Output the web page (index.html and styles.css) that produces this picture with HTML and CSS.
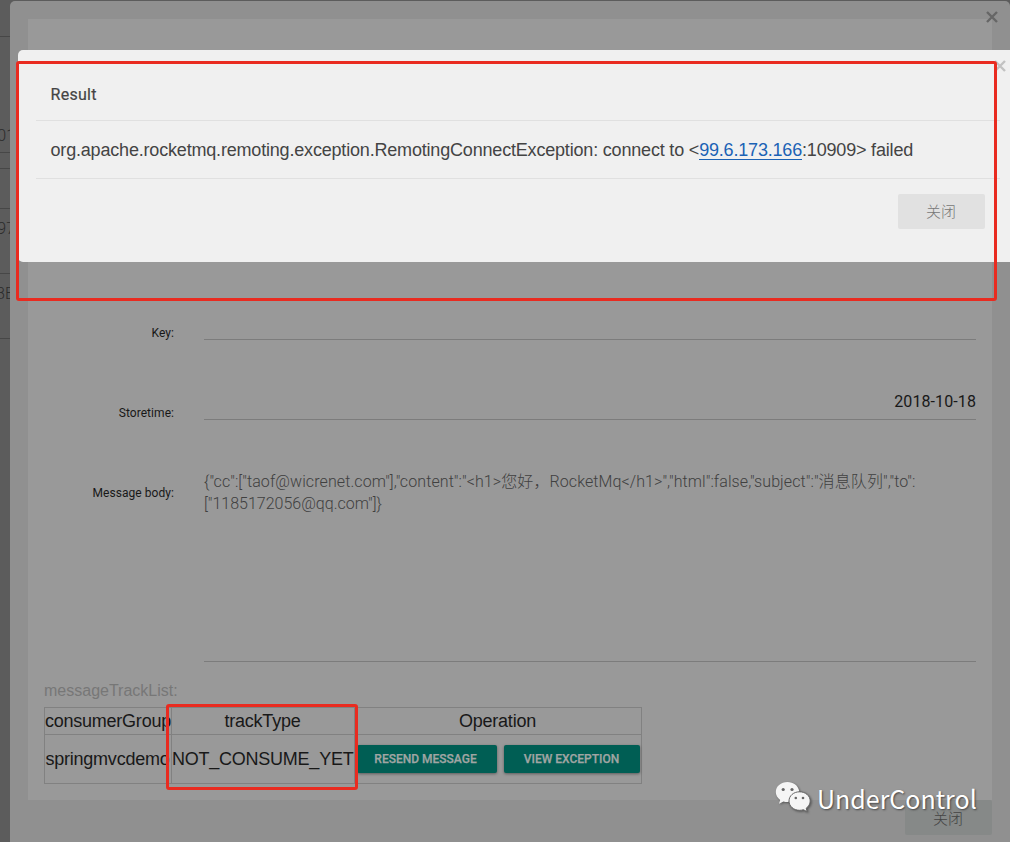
FILE: index.html
```
<!DOCTYPE html>
<html lang="zh">
<head>
<meta charset="utf-8">
<title>Message detail</title>
<link rel="stylesheet" href="styles.css">
</head>
<body>
<div class="screen">
  <aside class="behind">
    <div class="behind-row r1"></div>
    <div class="behind-row r2"><span>01</span></div>
    <div class="behind-row r3"></div>
    <div class="behind-row r4"></div>
    <div class="behind-row r5"><span>97</span></div>
    <div class="behind-row r6"><span>8E</span></div>
  </aside>
  <main class="modal">
    <svg class="modal-close" viewBox="0 0 12 12"><path d="M1 1l10 10M11 1l-10 10"/></svg>
    <section class="card">
      <div class="field"><label class="label">Key:</label><div class="input"></div></div>
      <div class="field"><label class="label">Storetime:</label><div class="input date">2018-10-18</div></div>
      <div class="field"><label class="label">Message body:</label><div class="input area"><span class="line">{"cc":["taof@wicrenet.com"],"content":"&lt;h1&gt;您好，RocketMq&lt;/h1&gt;","html":false,"subject":"消息队列","to":</span><br>["1185172056@qq.com"]}</div></div>
      <div class="track-title">messageTrackList:</div>
      <table class="track">
        <colgroup><col class="c1"><col class="c2"><col class="c3"></colgroup>
        <tr class="head"><th>consumerGroup</th><th>trackType</th><th>Operation</th></tr>
        <tr class="data"><td>springmvcdemo</td><td>NOT_CONSUME_YET</td>
          <td><div class="ops"><button class="btn resend">RESEND MESSAGE</button><button class="btn view">VIEW EXCEPTION</button></div></td></tr>
      </table>
    </section>
    <footer class="modal-foot"><button class="close-btn dim">关闭</button></footer>
  </main>

  <div class="dialog">
    <svg class="dialog-close" viewBox="0 0 12 12"><path d="M1 1l10 10M11 1l-10 10"/></svg>
    <div class="dialog-title">Result</div>
    <div class="dialog-body"><span class="msg">org.apache.rocketmq.remoting.exception.RemotingConnectException: connect to &lt;<a class="link">99.6.173.166</a>:10909&gt; failed</span></div>
    <div class="dialog-foot"><button class="close-btn">关闭</button></div>
  </div>

  <div class="mark mark-dialog"></div>
  <div class="mark mark-track"></div>

  <div class="watermark">
    <svg class="wechat" viewBox="0 0 36 32">
      <path class="bubble" d="M12.500 1C5.900 1 .8 5.400.8 11c0 3.300 1.700 6 4.400 7.900L4 22.800l4.500-2.300c1.500.400 3 .600 4.800.500L24.300 10.200C23.300 4.600 18.500 1 12.500 1z"/>
      <path class="bubble front" d="M24.500 10.800c-5.900 0-10.500 4-10.500 9.200s4.600 9.300 10.500 9.300c1.400 0 2.700-.200 3.900-.600l3.700 2-.900-3.500c2.500-1.700 4-4.300 4-7.200 0-5.200-4.700-9.200-10.700-9.200z"/>
      <g class="eyes"><circle cx="8.200" cy="8.500" r="1.600"/><circle cx="17" cy="8.500" r="1.600"/><circle cx="20.800" cy="17" r="1.300"/><circle cx="28" cy="17" r="1.300"/></g>
    </svg>
    <span class="wm-text">UnderControl</span>
  </div>
</div>
</body>
</html>
```
FILE: styles.css
```
* { box-sizing: border-box; }
body { margin: 0; }
button { border: 0; padding: 0; margin: 0; }
.screen {
  position: relative; width: 1010px; height: 842px; overflow: hidden;
  display: flex; background: #5c5c5c; padding-top: 1px;
  font-family: "Liberation Sans", "Noto Sans CJK SC", sans-serif; color: #181818;
}

/* page content that shows left of the modal */
.behind { width: 10px; overflow: hidden; flex: none; }
.behind-row {
  border-bottom: 1px solid #474747; display: flex; align-items: center; justify-content: flex-end;
  font: 300 16px/20px Roboto, sans-serif; color: #2b2b2b;
}
.behind-row span { margin-right: -5px; }
.r1 { height: 36px; }
.r2 { height: 116px; align-items: flex-end; padding-bottom: 6px; }
.r3 { height: 16px; }
.r4 { height: 40px; }
.r5 { height: 65px; align-items: flex-start; padding-top: 10px; }
.r6 { height: 65px; align-items: flex-start; padding-top: 10px; }
.behind-row.r6 span { margin-right: -4px; }

.modal {
  position: relative; flex: 1; background: #909090; border-radius: 5px 5px 0 0;
  padding: 18px 18px 0; height: 841px;
}
.modal-close, .dialog-close { position: absolute; width: 12px; height: 12px; fill: none; stroke-width: 2.4; }
.modal-close { right: 12px; top: 10px; stroke: #666; }
.card { background: #999; height: 781px; padding: 281px 16px 0; }
.field { display: flex; gap: 30px; margin-bottom: 40px; }
.label { width: 130px; height: 40px; padding-top: 25px; text-align: right; font: 12px/16px Roboto, sans-serif; letter-spacing: .05px; }
.input { flex: 1; height: 40px; border-bottom: 1px solid #7c7c7c; }
.date { text-align: right; font: 16px/20px Roboto, sans-serif; padding-top: 12px; letter-spacing: .1px; }
.area {
  height: 202px; padding-top: 11px; color: #404040;
  font: 300 16px/22px Roboto, "Noto Sans CJK SC", sans-serif; white-space: nowrap;
}
.line { letter-spacing: .09px; }
.field:nth-child(3) { margin-bottom: 18px; }
.track-title { font-size: 16px; line-height: 22px; color: #777; }
.track {
  margin-top: 5px; width: 598px; table-layout: fixed; border-collapse: collapse;
  font-size: 18px; line-height: 20px; text-align: center; letter-spacing: -.24px;
}
.c1 { width: 127px; }
.c2 { width: 183px; }
.c3 { width: 287px; }
.track th, .track td { border: 1px solid #818181; padding: 0 1px 0 0; font-weight: 400; white-space: nowrap; }
.head { height: 27px; }
.data { height: 49px; }
.ops { display: flex; gap: 7px; padding-left: 2px; margin-right: -1px; }
.btn {
  height: 28px; border-radius: 2px; background: #005e54; color: #a0a5a3;
  font: 500 12px/28px Roboto, sans-serif; box-shadow: 0 1px 3px rgba(0,0,0,.4);
  -webkit-text-stroke: .25px #a0a5a3;
}
.resend { width: 140px; padding-right: 3px; }
.view { width: 136px; padding-right: 1px; }
.modal-foot { display: flex; justify-content: flex-end; }
.close-btn {
  width: 87px; height: 35px; border-radius: 2px; background: #e1e1e1; color: #777;
  font: 300 15px/33px "Noto Sans CJK SC", sans-serif; padding: 0 1px 2px 0;
}
.dim { background: #868988; color: #444; padding-bottom: 1px; }

.dialog {
  position: absolute; left: 18px; top: 50px; width: 992px; height: 212px;
  background: #f0f0f0; border-radius: 5px 0 0 5px; padding: 18px 10px 0 18px;
  color: #444;
}
.dialog-close { right: 4px; top: 10px; stroke: #c2c2c2; }
.dialog-title {
  height: 53px; padding: 17px 14.500px 0; border-bottom: 1px solid #e0e0e0;
  font: 400 16px/20px Roboto, sans-serif; letter-spacing: .3px; -webkit-text-stroke: .2px #444;
}
.dialog-body {
  height: 58px; padding: 17px 14.500px 0; border-bottom: 1px solid #e0e0e0;
  font-size: 18px; line-height: 24px; letter-spacing: -.185px; white-space: nowrap;
}
.link { color: #1b62b5; border-bottom: 1px solid #1b62b5; display: inline-block; line-height: 17px; }
.dialog-foot { display: flex; justify-content: flex-end; padding: 15px 15px 0; }

.mark { position: absolute; border: 3px solid #e92b20; border-radius: 3px; }
.mark-dialog { left: 16px; top: 61px; width: 981px; height: 240px; }
.mark-track { left: 166px; top: 704px; width: 192px; height: 86px; }

.watermark { position: absolute; left: 775px; top: 781px; display: flex; gap: 6px; }
.wechat { width: 36px; height: 32px; overflow: visible; filter: drop-shadow(1px 1px 1px #555); }
.bubble { fill: #f5f5f5; }
.front { stroke: #666; stroke-width: 1; }
.eyes { fill: #666; }
.wm-text {
  color: #fff; font: 400 25px/34px "Noto Sans CJK SC", sans-serif;
  text-shadow: 1px 1px 2px #444;
}
```
